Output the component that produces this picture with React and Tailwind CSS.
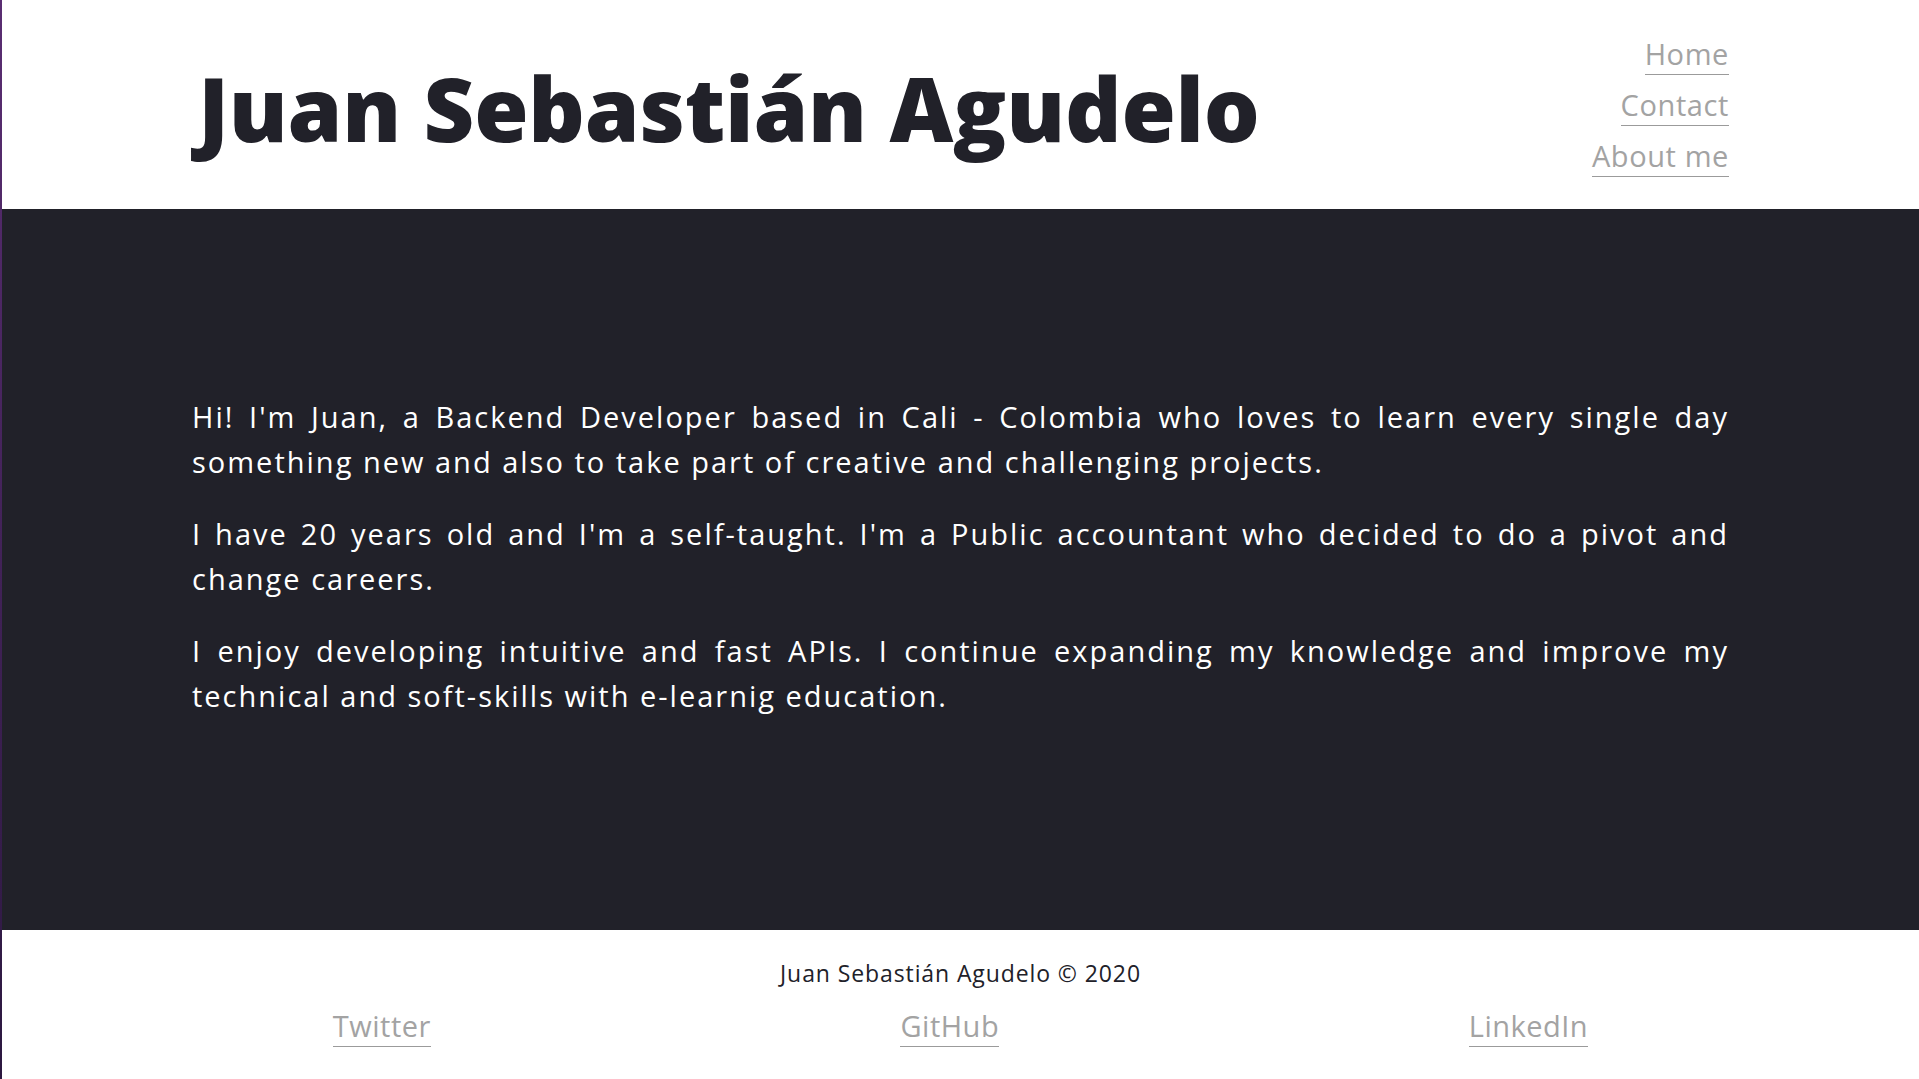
const navLinks = ['Home', 'Contact', 'About me']
const socialLinks = ['Twitter', 'GitHub', 'LinkedIn']

const sans = "font-['Open_Sans',sans-serif]"

export default function App() {
  return (
    <div className="flex min-h-[1079px] w-full bg-white">
      <div className="w-[2px] shrink-0 bg-gradient-to-b from-[#5a2d72] to-[#2c1840]" />
      <div className="flex-1 flex flex-col">
        <header className="h-[209px] flex justify-between px-[190px]">
          <h1 className={`mt-[64px] ml-[6px] text-[88px] leading-none font-extrabold tracking-[-0.2px] text-[#212129] ${sans}`}>
            Juan Sebastián Agudelo
          </h1>
          <nav className="pt-[39px] flex flex-col items-end gap-[15px]">
            {navLinks.map((l) => (
              <a
                key={l}
                href="#"
                className={`text-[29px] leading-none tracking-[0.6px] pb-[6px] border-b border-[#9b9b9b] text-[#a3a3a3] ${sans}`}
              >
                {l}
              </a>
            ))}
          </nav>
        </header>

        <main className="h-[721px] bg-[#212129] px-[190px] pt-[185px]">
          <div className={`text-white text-[29px] leading-[45px] tracking-[2px] text-justify space-y-[27px] ${sans}`}>
            <p>
              Hi! I'm Juan, a Backend Developer based in Cali - Colombia who loves to learn every single day
              something new and also to take part of creative and challenging projects.
            </p>
            <p>
              I have 20 years old and I'm a self-taught. I'm a Public accountant who decided to do a pivot and
              change careers.
            </p>
            <p>
              I enjoy developing intuitive and fast APIs. I continue expanding my knowledge and improve my
              technical and soft-skills with e-learnig education.
            </p>
          </div>
        </main>

        <footer className="h-[149px] flex flex-col items-center">
          <p className={`mt-[32px] text-[23px] leading-none tracking-[0.9px] text-[#212129] ${sans}`}>
            Juan Sebastián Agudelo © 2020
          </p>
          <div className="w-full flex justify-around px-[96px] mt-[26px]">
            {socialLinks.map((l) => (
              <a
                key={l}
                href="#"
                className={`text-[29px] leading-none tracking-[0.5px] pb-[6px] border-b border-[#9b9b9b] text-[#a3a3a3] ${sans}`}
              >
                {l}
              </a>
            ))}
          </div>
        </footer>
      </div>
    </div>
  )
}
